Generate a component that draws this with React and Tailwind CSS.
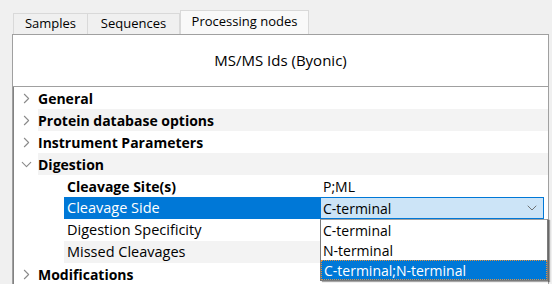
import { ChevronRight, ChevronDown } from "lucide-react";

const groups = [
  { label: "General", open: false },
  { label: "Protein database options", open: false },
  { label: "Instrument Parameters", open: false },
  { label: "Digestion", open: true },
];

const children = [
  { label: "Cleavage Site(s)", value: "P;ML", bold: true },
  { label: "Cleavage Side", selected: true },
  { label: "Digestion Specificity" },
  { label: "Missed Cleavages" },
];

const App = () => {
  return (
    <div className="w-[552px] h-[284px] bg-[#f0f0f0] overflow-hidden relative font-['Open_Sans',sans-serif] text-black">
      {/* tabs */}
      <div className="flex items-end h-[34px] pl-[13px]">
        <div className="w-[75px] h-[21px] border border-b-0 border-[#d9d9d9] flex items-center justify-center text-[13px]">Samples</div>
        <div className="w-[92px] h-[21px] border border-b-0 border-l-0 border-[#d9d9d9] flex items-center justify-center text-[13px]">Sequences</div>
        <div className="w-[129px] h-[24px] border border-b-0 border-[#d9d9d9] bg-[#f9f9f9] flex items-center justify-center text-[13px] pb-[2px]">Processing nodes</div>
      </div>

      {/* panel */}
      <div className="ml-[12px] w-[537px] border-t border-l border-r border-[#a0a0a0]">
        <div className="h-[52px] bg-white flex items-center justify-center text-[15px] border-b border-[#a0a0a0]">MS/MS Ids (Byonic)</div>
        <div className="bg-white border-l border-[#828282] text-[14px]">
          {groups.map((g, i) => (
            <div key={g.label} className="flex h-[22px] items-center">
              <div className="w-[24px] flex justify-center text-[#8a8a8a]">
                {g.open ? <ChevronDown size={17} strokeWidth={1.5} /> : <ChevronRight size={17} strokeWidth={1.5} />}
              </div>
              <div className={`flex-1 h-full flex items-center font-bold ${i % 2 === 1 ? "bg-[#f3f3f3]" : ""}`}>{g.label}</div>
            </div>
          ))}
          {children.map((c, i) => (
            <div key={c.label} className="flex h-[22px] items-center">
              <div className="w-[50px]" />
              <div className={`w-[256px] h-full flex items-center pl-[3px] ${c.bold ? "font-bold" : "text-[14.5px]"} ${c.selected ? "bg-[#0078d7] text-white" : i % 2 === 1 ? "bg-[#f3f3f3]" : ""}`}>{c.label}</div>
              {c.selected ? (
                <div className="w-[224px] h-full bg-[#cce4f7] border border-[#0078d7] flex items-center justify-between pl-[2px] pr-[3px]">
                  <span>C-terminal</span>
                  <ChevronDown size={16} strokeWidth={1.3} className="text-[#606060]" />
                </div>
              ) : (
                <div className={`flex-1 h-full flex items-center pl-[3px] ${i % 2 === 1 ? "bg-[#f3f3f3]" : ""}`}>{c.value}</div>
              )}
            </div>
          ))}
          <div className="flex h-[22px] items-center">
            <div className="w-[24px] flex justify-center text-[#8a8a8a]">
              <ChevronRight size={17} strokeWidth={1.5} />
            </div>
            <div className="flex-1 font-bold">Modifications</div>
          </div>
        </div>
      </div>

      {/* open dropdown */}
      <div className="absolute left-[320px] top-[219px] w-[228px] bg-white border border-[#7a7a7a] border-t-[#a0a0a0] text-[14px] shadow-[2px_1px_1px_rgba(0,0,0,0.35)]">
        <div className="h-[20px] flex items-center pl-[2px]">C-terminal</div>
        <div className="h-[20px] flex items-center pl-[2px]">N-terminal</div>
        <div className="h-[20px] flex items-center pl-[2px] bg-[#0078d7] text-white border border-dotted border-[#e0913f]">C-terminal;N-terminal</div>
      </div>
    </div>
  );
};

export default App;
